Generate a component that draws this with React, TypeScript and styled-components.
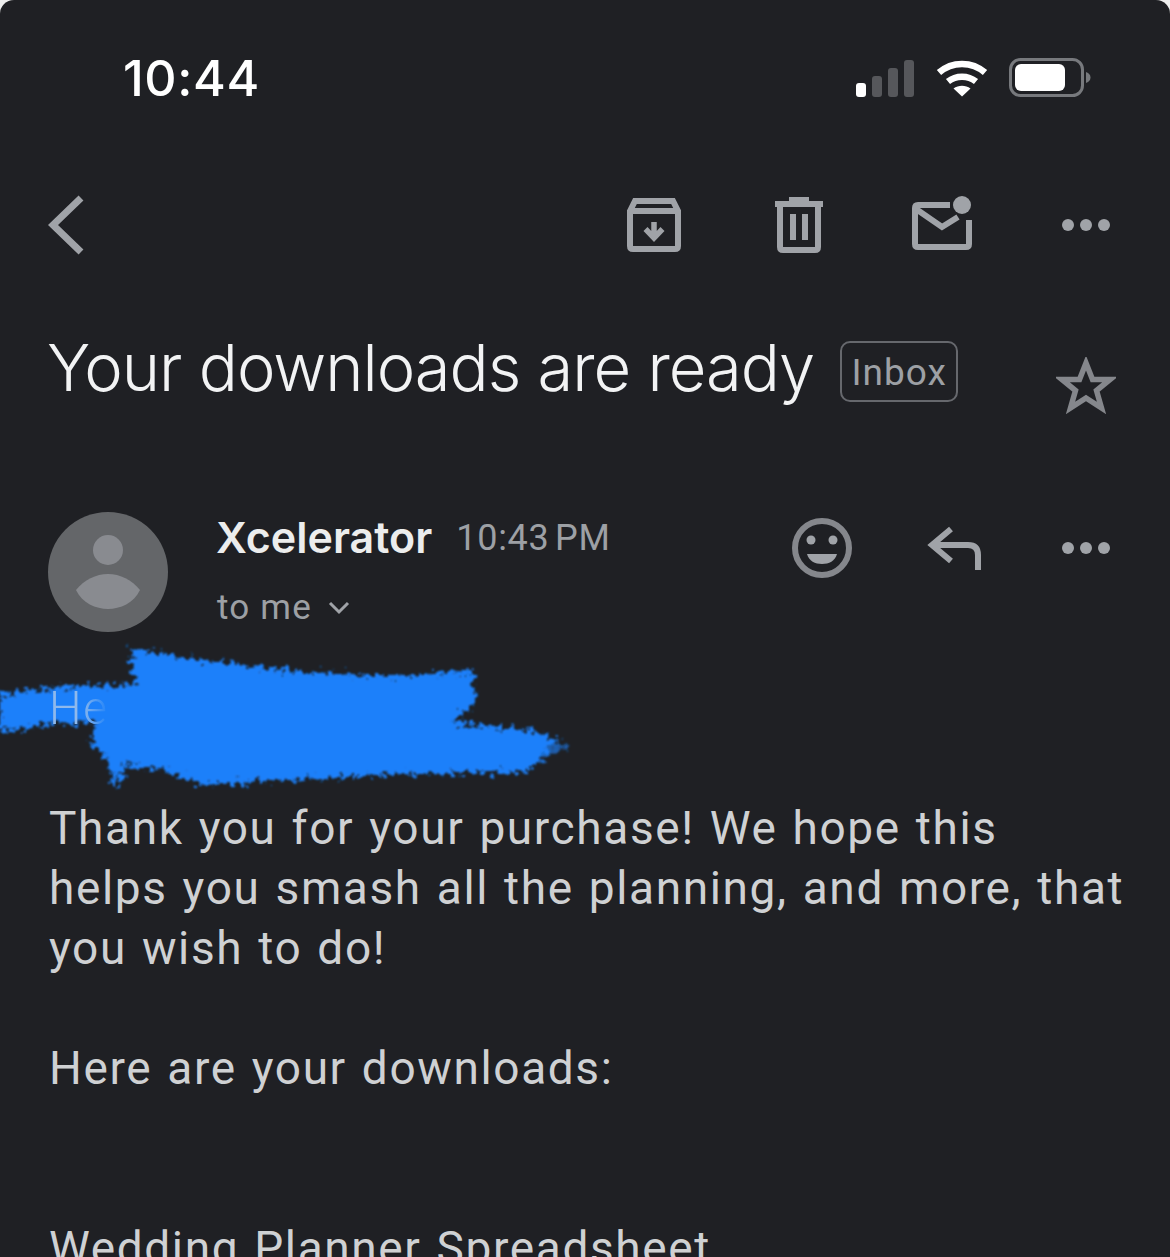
import React from "react";
import styled, { createGlobalStyle } from "styled-components";

const GlobalStyle = createGlobalStyle`
  html, body {
    margin: 0;
    padding: 0;
    background: #eeeeee;
  }
  * {
    box-sizing: border-box;
  }
`;

const Screen = styled.div`
  position: relative;
  width: 1170px;
  height: 1257px;
  overflow: hidden;
  border-radius: 14px 14px 0 0;
  background: #1f2024;
  font-family: Roboto, "Liberation Sans", sans-serif;
`;

const StatusBar = styled.div`
  display: flex;
  align-items: center;
  justify-content: space-between;
  height: 156px;
  padding: 0 79px 0 123px;
`;

const Clock = styled.div`
  font-family: Inter, sans-serif;
  font-size: 50px;
  font-weight: 500;
  letter-spacing: 0.6px;
  color: #fff;
`;

const StatusIcons = styled.div`
  display: flex;
  align-items: center;
  gap: 21px;
`;

const Toolbar = styled.div`
  display: flex;
  align-items: center;
  justify-content: space-between;
  height: 138px;
  padding: 0 59px 0 48px;
`;

const ToolGroup = styled.div`
  display: flex;
  align-items: center;
  gap: 89px;
`;

const SubjectRow = styled.div`
  display: flex;
  align-items: center;
  height: 150px;
  padding: 0 54px 0 47px;
`;

const Subject = styled.h1`
  margin: -4px 0 0;
  font-family: Inter, sans-serif;
  font-size: 65px;
  font-weight: 300;
  letter-spacing: -1px;
  color: #f2f3f4;
  white-space: nowrap;
`;

const Label = styled.span`
  display: block;
  margin: 5px 0 0 26px;
  height: 61px;
  width: 118px;
  border: 2px solid #66686d;
  border-radius: 10px;
  font-size: 37px;
  line-height: 59px;
  text-align: center;
  letter-spacing: 1px;
  color: #9da0a5;
`;

const Star = styled.div`
  margin: 36px 0 0 auto;
  height: 60px;
`;

const SenderRow = styled.div`
  display: flex;
  align-items: flex-start;
  margin-top: 68px;
  padding: 0 59px 0 48px;
`;

const Avatar = styled.div`
  flex: none;
  width: 120px;
  height: 120px;
  margin-right: 49px;
`;

const SenderInfo = styled.div`
  flex: 1;
`;

const NameLine = styled.div`
  display: flex;
  align-items: center;
  gap: 24px;
  height: 50px;
`;

const SenderName = styled.span`
  margin: -1px 0 0 -1px;
  font-family: Inter, sans-serif;
  font-size: 43px;
  font-weight: 600;
  color: #eceded;
`;

const SentTime = styled.span`
  margin-top: 1px;
  font-size: 36px;
  letter-spacing: 0.7px;
  word-spacing: -4px;
  color: #9da0a5;
`;

const Recipients = styled.div`
  display: flex;
  align-items: center;
  gap: 16px;
  margin-top: 25px;
  font-size: 35px;
  letter-spacing: 1.2px;
  color: #9da0a5;
`;

const SenderActions = styled.div`
  display: flex;
  align-items: center;
  gap: 75px;
  padding-top: 6px;
`;

const MessageBody = styled.div`
  position: relative;
  margin-top: 46px;
  padding: 0 44px 0 49px;
  font-size: 46px;
  line-height: 60px;
  letter-spacing: 1.62px;
  word-spacing: 2px;
  color: #cfd1d3;
`;

const Paragraph = styled.p<{ $gap?: number }>`
  margin: 0 0 ${(props) => props.$gap ?? 60}px;
`;

const Greeting = styled(Paragraph)`
  position: relative;
  z-index: 1;
  display: table;
  font-weight: 300;
  background: linear-gradient(90deg, #8fb9ec 0%, #8fb9ec 55%, #1a80fa 100%);
  -webkit-background-clip: text;
  background-clip: text;
  color: transparent;
`;

const Scribble = styled.svg`
  position: absolute;
  left: 0;
  top: -38px;
`;

const ICON = "#a0a3a8";

const Dots = () => (
  <svg width="50" height="14" viewBox="0 0 50 14" fill={ICON}>
    <circle cx="7" cy="7" r="6" />
    <circle cx="25" cy="7" r="6" />
    <circle cx="43" cy="7" r="6" />
  </svg>
);

export default function App() {
  return (
    <Screen>
      <GlobalStyle />
      <StatusBar>
        <Clock>10:44</Clock>
        <StatusIcons>
          <svg width="60" height="38" viewBox="0 0 60 38">
            <rect x="1" y="24" width="10" height="14" rx="3" fill="#fff" />
            <rect x="17" y="17" width="10" height="21" rx="3" fill="#56575b" />
            <rect x="33" y="9" width="10" height="29" rx="3" fill="#56575b" />
            <rect x="49" y="1" width="10" height="37" rx="3" fill="#56575b" />
          </svg>
          <svg width="52" height="38" viewBox="0 0 52 38" fill="none" stroke="#fff" strokeWidth="6.5">
            <path d="M3 13.5C16 2 36 2 49 13.5" />
            <path d="M12 22.5C20 16 32 16 40 22.5" />
            <path d="M26 37.5L17.5 29.5C22.5 25.8 29.5 25.8 34.5 29.5Z" fill="#fff" stroke="none" />
          </svg>
          <svg width="82" height="40" viewBox="0 0 82 40">
            <rect x="1.5" y="1.5" width="72" height="36" rx="10" fill="none" stroke="#77797d" strokeWidth="3" />
            <rect x="6" y="6" width="50" height="27" rx="6" fill="#fff" />
            <path d="M77 14C80 15 81.500 17 81.500 19.500C81.500 22 80 24 77 25Z" fill="#77797d" />
          </svg>
        </StatusIcons>
      </StatusBar>

      <Toolbar>
        <svg width="36" height="60" viewBox="0 0 36 60" fill="none" stroke={ICON} strokeWidth="7">
          <path d="M33 3L5 30L33 57" />
        </svg>
        <ToolGroup>
          <svg width="59" height="56" viewBox="0 0 59 56" fill="none" stroke={ICON} strokeWidth="6">
            <path d="M3 14L8 4H46L51 14V49Q51 52 48 52H6Q3 52 3 49Z" />
            <path d="M4 14H50" />
            <path d="M27 25V41M18.500 32L27 41L35.500 32" strokeWidth="5.500" />
          </svg>
          <svg width="48" height="56" viewBox="0 0 48 56" fill="none" stroke={ICON} strokeWidth="6">
            <path d="M0 7H48" />
            <path d="M14 2H34" />
            <path d="M5 8V50Q5 53 8 53H40Q43 53 43 50V8" />
            <path d="M18 17V43M30 17V43" />
          </svg>
          <svg width="60" height="58" viewBox="0 0 60 58" fill="none" stroke={ICON} strokeWidth="6">
            <path d="M38 9H6Q3 9 3 12V48Q3 51 6 51H54Q57 51 57 48V24" />
            <path d="M4 13L30 31L46 21" />
            <circle cx="50" cy="9" r="9" fill={ICON} stroke="none" />
          </svg>
          <Dots />
        </ToolGroup>
      </Toolbar>

      <SubjectRow>
        <Subject>Your downloads are ready</Subject>
        <Label>Inbox</Label>
        <Star>
          <svg width="60" height="58" viewBox="0 0 60 58" fill="none" stroke="#85878c" strokeWidth="5.500">
            <path d="M30 6L36.500 22.500H54L40.500 33.500L45.500 51L30 41L14.500 51L19.500 33.500L6 22.500H23.500Z" />
          </svg>
        </Star>
      </SubjectRow>

      <SenderRow>
        <Avatar>
          <svg width="120" height="120" viewBox="0 0 120 120">
            <circle cx="60" cy="60" r="60" fill="#646669" />
            <circle cx="60" cy="38" r="15" fill="#898b90" />
            <path d="M28 78C36 68 48 62 60 62C72 62 84 68 92 78C86 91 72 97 60 97C48 97 34 91 28 78Z" fill="#898b90" />
          </svg>
        </Avatar>
        <SenderInfo>
          <NameLine>
            <SenderName>Xcelerator</SenderName>
            <SentTime>10:43 PM</SentTime>
          </NameLine>
          <Recipients>
            to me
            <svg width="22" height="14" viewBox="0 0 22 14" fill="none" stroke={ICON} strokeWidth="3">
              <path d="M2 2L11 11L20 2" />
            </svg>
          </Recipients>
        </SenderInfo>
        <SenderActions>
          <svg width="60" height="60" viewBox="0 0 60 60">
            <circle cx="30" cy="30" r="27" fill="none" stroke="#85878c" strokeWidth="6" />
            <circle cx="19" cy="22" r="4.500" fill={ICON} />
            <circle cx="41" cy="22" r="4.500" fill={ICON} />
            <path d="M15 36H45C43 43 37 46 30 46C23 46 17 43 15 36Z" fill={ICON} />
          </svg>
          <svg width="59" height="44" viewBox="0 0 59 44" fill="none" stroke={ICON} strokeWidth="6">
            <path d="M24 3L5 19L24 35" />
            <path d="M5 19H41Q51 19 51 29V44" />
          </svg>
          <Dots />
        </SenderActions>
      </SenderRow>

      <MessageBody>
        <Scribble width="600" height="170" viewBox="0 0 600 170">
          <defs>
            <filter id="rough" x="-5%" y="-15%" width="110%" height="130%">
              <feTurbulence type="fractalNoise" baseFrequency="0.2" numOctaves="3" seed="4" />
              <feDisplacementMap in="SourceGraphic" scale="20" xChannelSelector="R" yChannelSelector="G" />
              <feGaussianBlur stdDeviation="0.9" />
            </filter>
          </defs>
          <g filter="url(#rough)" fill="#1a80fa">
            <path d="M0 54L60 47L135 45L130 8L200 20L300 32L400 36L472 30L476 62L452 82L530 90L555 100L528 132L400 134L200 145L165 130L125 125L120 145L112 145L108 120L92 105L95 82L40 85L0 92Z" />
            <path d="M535 90L568 106L535 124Z" opacity="0.65" />
          </g>
        </Scribble>
        <Greeting>He</Greeting>
        <Paragraph>
          Thank you for your purchase! We hope this helps you smash all the planning, and more, that you wish to do!
        </Paragraph>
        <Paragraph $gap={120}>Here are your downloads:</Paragraph>
        <Paragraph>Wedding Planner Spreadsheet</Paragraph>
      </MessageBody>
    </Screen>
  );
}
